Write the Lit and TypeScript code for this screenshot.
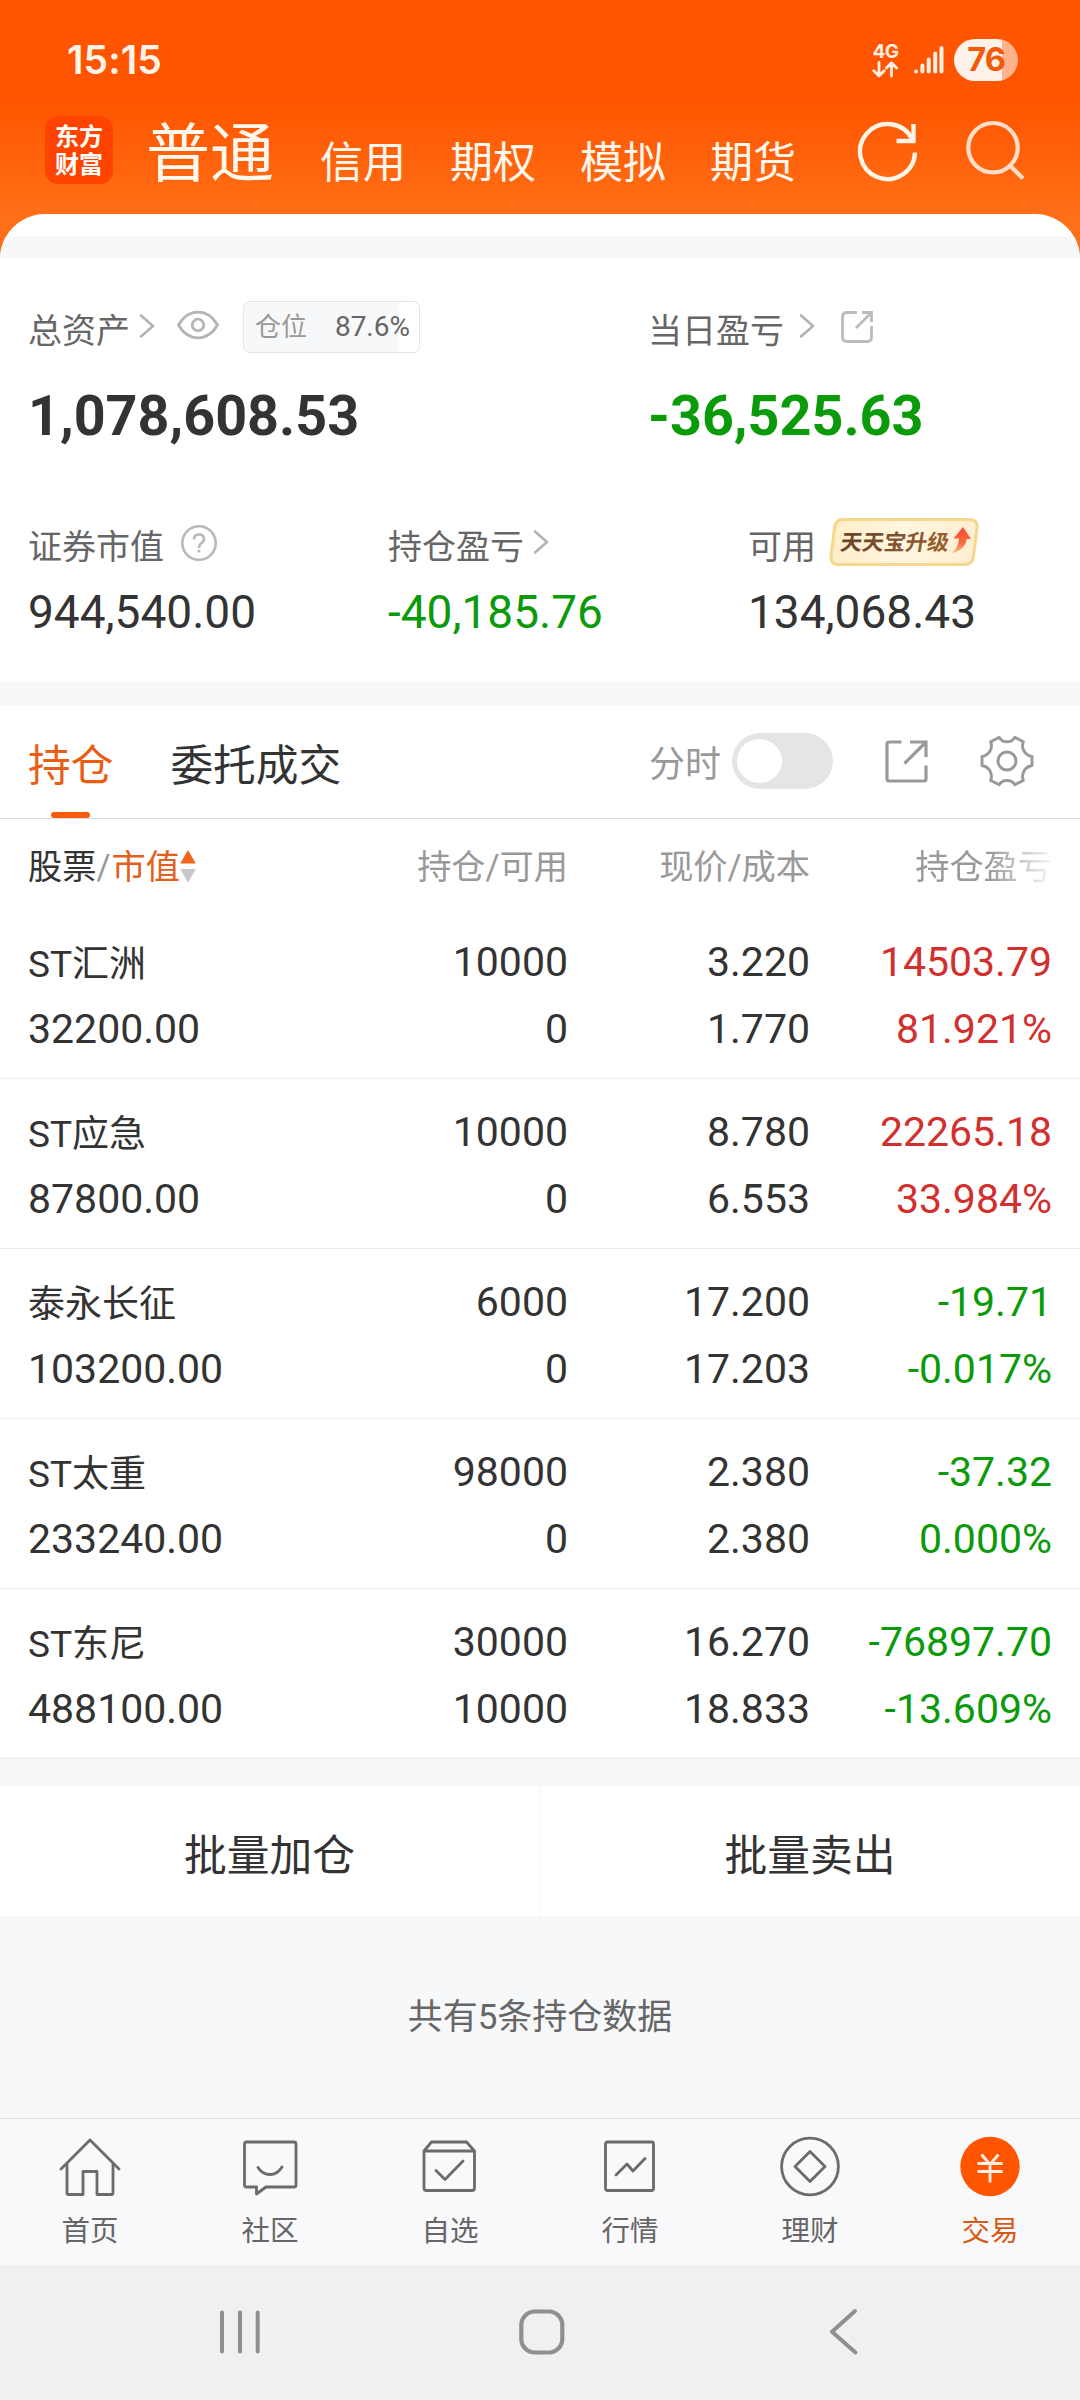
import { LitElement, html, css, svg } from "lit";
import { customElement } from "lit/decorators.js";

type Tone = "up" | "down";

interface Holding {
  name: string;
  value: string;
  qty: string;
  avail: string;
  price: string;
  cost: string;
  profit: string;
  rate: string;
  tone: Tone;
}

const holdings: Holding[] = [
  { name: "ST汇洲", value: "32200.00", qty: "10000", avail: "0", price: "3.220", cost: "1.770", profit: "14503.79", rate: "81.921%", tone: "up" },
  { name: "ST应急", value: "87800.00", qty: "10000", avail: "0", price: "8.780", cost: "6.553", profit: "22265.18", rate: "33.984%", tone: "up" },
  { name: "泰永长征", value: "103200.00", qty: "6000", avail: "0", price: "17.200", cost: "17.203", profit: "-19.71", rate: "-0.017%", tone: "down" },
  { name: "ST太重", value: "233240.00", qty: "98000", avail: "0", price: "2.380", cost: "2.380", profit: "-37.32", rate: "0.000%", tone: "down" },
  { name: "ST东尼", value: "488100.00", qty: "30000", avail: "10000", price: "16.270", cost: "18.833", profit: "-76897.70", rate: "-13.609%", tone: "down" },
];

const chevron = html`<svg class="chevron" width="16" height="26" viewBox="0 0 16 26" fill="none" stroke="#b3b3b3" stroke-width="2.6" stroke-linecap="round" stroke-linejoin="round"><path d="M2 2.500L14 13L2 23.500" /></svg>`;

const navIcons = [
  { label: "首页", icon: svg`<path d="M3 36L32 7L61 36" stroke-linecap="round"/><path d="M9 31V60Q9 61.500 10.500 61.500H25V38.500H39V61.500H53.500Q55 61.500 55 60V31"/>` },
  { label: "社区", icon: svg`<path d="M8 9H56Q58 9 58 11V52Q58 54 56 54H28L18.500 61V54H8.500Q6.500 54 6.500 52V11Q6.500 9 8.500 9Z"/><path d="M20 34.500Q24.500 41.500 32 41.500Q39.500 41.500 44 34" stroke-linecap="round"/>` },
  { label: "自选", icon: svg`<path d="M6 18L13.500 9H48.500L56.500 18V55Q56.500 57.500 54 57.500H8.500Q6 57.500 6 55Z"/><path d="M6 18H56.500"/><path d="M18 37.500L27 46.500L45 28" stroke-linecap="round"/>` },
  { label: "行情", icon: svg`<rect x="7.500" y="9" width="48" height="48.500" rx="2"/><path d="M18 42L29 31L35 38L47 25.500" stroke-linecap="round"/>` },
  { label: "理财", icon: svg`<circle cx="32" cy="33.500" r="28.400"/><path d="M32 18.500L47 33.500L32 48.500L17 33.500Z"/>` },
  { label: "交易", icon: svg`<circle cx="32" cy="33.500" r="29.700" fill="#ff5500" stroke="none"/><path d="M23.500 21.500L32 31.500L40.500 21.500M32 31.500V49.500M19.500 30.500H44.500M19.500 38.500H44.500" stroke="#fff0e4"/>` },
];

@customElement("app-root")
export class AppRoot extends LitElement {
  static styles = css`
    :host {
      display: block;
      width: 1080px;
      height: 2400px;
      overflow: hidden;
      background: #f7f8fa;
      color: #333;
      font-family: Roboto, "Noto Sans CJK SC", sans-serif;
    }
    * { box-sizing: border-box; }
    svg { display: block; flex: none; }
    .row { display: flex; align-items: flex-start; white-space: nowrap; }

    .header {
      height: 259px;
      background: linear-gradient(#ff5500 0, #ff5500 100px, #ff6f17 214px);
      color: #fff8ee;
    }
    .status {
      height: 106px;
      padding: 14px 62px 0 67px;
      display: flex;
      align-items: center;
    }
    .time { font: 600 39px/40px Inter, sans-serif; letter-spacing: 0.1px; flex: 1; color: #fff4e8; }
    .net { width: 27px; }
    .net-name { font: 700 19px/20px Inter, sans-serif; text-align: center; letter-spacing: -0.5px; color: #ffeee2; margin-bottom: -1px; }
    .signal { margin: 0 10px 0 14px; }
    .battery {
      width: 64px; height: 42px; border-radius: 21px;
      background: linear-gradient(90deg, #fff2ea 0 48px, #ffb28c 48px);
      color: #f25a08; font: 700 32.500px/42px Inter, sans-serif; text-align: center; letter-spacing: -1px;
    }
    .title { height: 108px; padding-left: 45px; }
    .logo {
      width: 68px; height: 68px; margin: 10px 33px 0 0; padding-top: 7px; border-radius: 13px;
      background: #ff4400; font: 700 24px/28px Roboto, "Noto Sans CJK SC", sans-serif; text-align: center; color: #fff;
    }
    .logo-line { display: block; height: 28px; }
    .mode-main { font-size: 64px; line-height: 64px; margin: 17px 46px 0 0; }
    .modes { display: flex; gap: 44px; font-size: 43px; line-height: 44px; padding-top: 35px; }
    .refresh { margin: 13px 42px 0 60px; }
    .search { margin-top: 13px; }

    .sheet { margin-top: -45px; border-radius: 45px 45px 0 0; overflow: hidden; background: #fff; }
    .gap { height: 23px; background: #f7f8fa; }
    .gap.first { margin-top: 22px; }

    .assets { height: 423px; padding: 42px 0 0 28px; color: #666; }
    .pair { display: grid; grid-template-columns: 620px 1fr; }
    .trio { display: grid; grid-template-columns: 360px 360px 1fr; margin-top: 68px; }
    .label { height: 52px; font-size: 34px; line-height: 60px; }
    .trio .label { height: 50px; }
    .label .chevron { margin: 12px 0 0 9px; }
    .label .spacer { width: 6px; }
    .total { font-size: 55.700px; font-weight: 700; line-height: 66px; margin-top: 30px; color: #333; }
    .sum { font-size: 46px; line-height: 50px; margin-top: 20px; color: #333; }
    .down { color: #0a9a0a; }
    .up { color: #d2302f; }
    .eye { margin: 9px 0 0 22px; }
    .ratio {
      display: flex; align-items: center; justify-content: space-between;
      width: 177px; height: 52px; margin-left: 24px; padding: 0 9px 0 11px;
      border: 1px solid #e2e4e8; border-radius: 7px;
      background: linear-gradient(90deg, #f7f8fa 0 155px, #fff 155px);
      font-size: 28px; line-height: 50px;
    }
    .ratio-name { font-size: 26px; color: #999; }
    .share { margin: 8px 0 0 24px; }
    .help { margin: 7px 0 0 16px; }
    .badge { margin: 0 0 0 13px; }

    .tabs { height: 114px; padding: 0 0 0 28px; border-bottom: 1px solid #dcdcdc; font-size: 42.700px; line-height: 123px; }
    .tab { height: 113px; margin-right: 57px; display: flex; flex-direction: column; align-items: center; }
    .tab-text { height: 107px; }
    .tab.on { color: #ea5d12; }
    .bar { width: 39px; height: 6px; border-radius: 3px; background: #f95a0c; }
    .minute { margin-left: auto; font-size: 36px; line-height: 121px; color: #999; }
    .switch { width: 101px; height: 56px; border-radius: 28px; background: #e5e5e7; margin: 28px 0 0 11px; padding: 6px 5px; }
    .knob { width: 45px; height: 44px; border-radius: 50%; background: #fff; }
    .open { margin: 33px 0 0 50px; }
    .gear { margin: 29px 46px 0 51px; }

    .cols { display: grid; grid-template-columns: 257px 283px 242px 242px; padding-left: 28px; text-align: right; white-space: nowrap; }
    .heads { height: 90px; font-size: 34.200px; line-height: 97px; color: #999; }
    .first-col { text-align: left; }
    .name-head { display: flex; color: #333; }
    .slash { color: #999; padding-right: 1px; }
    .sorted { color: #e0601c; }
    .sort { margin: 31px 0 0 0; }
    .fade { -webkit-mask-image: linear-gradient(90deg, #000 0 178px, transparent 248px); mask-image: linear-gradient(90deg, #000 0 178px, transparent 248px); }
    .item { height: 170px; padding-top: 20px; border-bottom: 1px solid #ebebed; font-size: 41px; line-height: 67px; }
    .name { font-size: 37px; line-height: 72px; height: 67px; }

    .batch { display: grid; grid-template-columns: 539px 1px 540px; height: 129px; margin-top: 28px; background: #fff; font-size: 42.800px; line-height: 138px; text-align: center; }
    .divider { background: #f4f5f7; }
    .note { height: 202px; font-size: 35px; line-height: 204px; text-align: center; color: #666; }
    .nav { display: grid; grid-template-columns: repeat(6, 180px); height: 147px; border-top: 1px solid #e0e1e3; background: #f9f9fb; color: #666; font-size: 28.500px; line-height: 40px; text-align: center; }
    .nav-item { padding-top: 14px; }
    .nav-item svg { margin: 0 0 11px 57.500px; }
    .nav-item.on { color: #d95a14; }
    .system { display: flex; height: 135px; background: #f0f0f2; padding: 42px 0 0 218px; }
    .home { margin: 0 264px 0 255px; }
  `;

  render() {
    return html`
      <header class="header">
        <div class="status">
          <div class="time">15:15</div>
          <div class="net">
            <div class="net-name">4G</div>
            <svg width="27" height="17" viewBox="0 0 27 17" fill="none" stroke="#ffeee2" stroke-width="2.800" stroke-linecap="round" stroke-linejoin="round"><path d="M7 1.500V15M1.800 9.800L7 15L12.200 9.800M19.500 15V1.800M14.300 7L19.500 1.800L24.700 7" /></svg>
          </div>
          <svg class="signal" width="31" height="30" viewBox="0 0 31 30" stroke="#ffeee2" stroke-width="4" stroke-linecap="round"><path d="M3 26.500V26.600M9.400 20.500V26.500M15.700 14.500V26.500M22.200 8.500V26.500M28.500 3V26.500" /></svg>
          <div class="battery">76</div>
        </div>
        <div class="title row">
          <div class="logo"><span class="logo-line">东方</span><span class="logo-line">财富</span></div>
          <div class="mode-main">普通</div>
          <div class="modes"><span>信用</span><span>期权</span><span>模拟</span><span>期货</span></div>
          <svg class="refresh" width="64" height="64" viewBox="0 0 64 64" fill="none" stroke="#fff4e6" stroke-width="4.400"><path d="M59 33.500A27.500 27.500 0 1 1 56 20" /><path d="M57.500 5V22H40.500" /></svg>
          <svg class="search" width="64" height="64" viewBox="0 0 64 64" fill="none" stroke="#ffdfc8" stroke-width="4.200"><circle cx="31" cy="28.700" r="24.700" /><path d="M48 46.500L61 59.500" /></svg>
        </div>
      </header>

      <main class="sheet">
        <div class="gap first"></div>
        <section class="assets">
          <div class="pair">
            <div>
              <div class="label row">
                <span>总资产</span>${chevron}
                <svg class="eye" width="42" height="30" viewBox="0 0 42 30" fill="none" stroke="#b5b5b5" stroke-width="2.800" stroke-linejoin="round"><path d="M1.500 15Q9 2.200 21 2.200Q33 2.200 40.500 15Q33 27.800 21 27.800Q9 27.800 1.500 15Z" /><circle cx="21" cy="15" r="5.800" /></svg>
                <div class="ratio"><span class="ratio-name">仓位</span><span>87.6%</span></div>
              </div>
              <div class="total">1,078,608.53</div>
            </div>
            <div>
              <div class="label row">
                <span>当日盈亏</span><span class="spacer"></span>${chevron}
                <svg class="share" width="36" height="36" viewBox="0 0 36 36" fill="none" stroke="#bcbcbc" stroke-width="2.800"><path d="M18 3.500H8Q3.500 3.500 3.500 8V28Q3.500 32.500 8 32.500H28Q32.500 32.500 32.500 28V17" /><path d="M23 3.500H32.500V13M32.500 3.500L17 19" /></svg>
              </div>
              <div class="total down">-36,525.63</div>
            </div>
          </div>
          <div class="trio">
            <div>
              <div class="label row">
                <span>证券市值</span>
                <svg class="help" width="38" height="38" viewBox="0 0 38 38" fill="none" stroke="#b9b9b9" stroke-width="2.600"><circle cx="19" cy="19" r="16.700" /><path d="M14 15.500Q14 10.500 19 10.500Q24 10.500 24 15Q24 17.500 21 19.500Q19 21 19 24M19 25.800V28.600" /></svg>
              </div>
              <div class="sum">944,540.00</div>
            </div>
            <div>
              <div class="label row"><span>持仓盈亏</span>${chevron}</div>
              <div class="sum down">-40,185.76</div>
            </div>
            <div>
              <div class="label row">
                <span>可用</span>
                <svg class="badge" width="152" height="50" viewBox="0 0 152 50">
                  <defs>
                    <linearGradient id="arrow" x1="0" y1="0" x2="0" y2="1"><stop offset="0" stop-color="#fb4a38" /><stop offset="0.6" stop-color="#f8683c" /><stop offset="1" stop-color="#fbb870" /></linearGradient>
                    <linearGradient id="ink" x1="0" y1="0" x2="1" y2="0"><stop offset="0" stop-color="#68432c" /><stop offset="1" stop-color="#9a6030" /></linearGradient>
                    <linearGradient id="cream" x1="0" y1="0" x2="1" y2="0"><stop offset="0" stop-color="#ffedc8" /><stop offset="0.5" stop-color="#fff6e0" /><stop offset="1" stop-color="#ffeed0" /></linearGradient>
                  </defs>
                  <path d="M14 2.500H140Q149 2.500 148 11L144.500 39Q143.500 47.500 136 47.500H10Q1 47.500 2 39L5.500 11Q6.500 2.500 14 2.500Z" fill="url(#cream)" stroke="#f6d78e" stroke-width="3" />
                  <text x="0" y="0" transform="translate(10.500 33.200) skewX(-9)" font-family="Noto Sans CJK SC" font-weight="700" font-size="21.700" fill="url(#ink)">天天宝升级</text>
                  <path d="M134 10L142 22H137.500Q137 32 123 36Q129.500 30.500 130 21.500H124.500Z" fill="url(#arrow)" />
                </svg>
              </div>
              <div class="sum">134,068.43</div>
            </div>
          </div>
        </section>
        <div class="gap"></div>

        <div class="tabs row">
          <div class="tab on"><div class="tab-text">持仓</div><div class="bar"></div></div>
          <div class="tab"><div class="tab-text">委托成交</div></div>
          <div class="minute">分时</div>
          <div class="switch"><div class="knob"></div></div>
          <svg class="open" width="46" height="46" viewBox="0 0 46 46" fill="none" stroke="#999" stroke-width="3.200"><path d="M18.500 4H6Q4 4 4 6V41Q4 43 6 43H41Q43 43 43 41V27.500" /><path d="M27 4H43V19M43 4L21.500 25.500" /></svg>
          <svg class="gear" width="54" height="54" viewBox="0 0 54 54" fill="none" stroke="#999" stroke-width="2.900" stroke-linejoin="round"><path d="M19.300 3.300Q21.500 7.700 27 7.700Q32.500 7.700 34.700 3.300L43.300 7.700Q41.500 13 44 17Q46.500 21.500 52 22.500V31.500Q46.500 32.500 44 37Q41.500 41.500 43.300 46.500L34.700 50.700Q32.500 46.500 27 46.500Q21.500 46.500 19.300 50.700L10.700 46.500Q12.500 41.500 10 37Q7.500 32.500 2 31.500V22.500Q7.500 21.500 10 17Q12.500 13 10.700 7.700Z" /><circle cx="27" cy="27" r="9" /></svg>
        </div>

        <div class="cols heads">
          <div class="name-head first-col"><span>股票</span><span class="slash">/</span><span class="sorted">市值</span>
            <svg class="sort" width="16" height="34" viewBox="0 0 16 34"><path d="M8 0L15.800 13.500H0.200Z" fill="#f26419" /><path d="M8 32.500L15.800 19H0.200Z" fill="#c8c8c8" /></svg>
          </div>
          <div>持仓/可用</div>
          <div>现价/成本</div>
          <div class="fade">持仓盈亏</div>
        </div>
        ${holdings.map(
          (h) => html`
            <div class="cols item">
              <div class="first-col"><div class="name">${h.name}</div><div>${h.value}</div></div>
              <div><div>${h.qty}</div><div>${h.avail}</div></div>
              <div><div>${h.price}</div><div>${h.cost}</div></div>
              <div class=${h.tone}><div>${h.profit}</div><div>${h.rate}</div></div>
            </div>
          `
        )}
      </main>

      <div class="batch"><div>批量加仓</div><div class="divider"></div><div>批量卖出</div></div>
      <div class="note">共有5条持仓数据</div>

      <nav class="nav">
        ${navIcons.map(
          (n, i) => html`
            <div class="nav-item ${i === 5 ? "on" : ""}">
              <svg width="64" height="68" viewBox="0 0 64 68" fill="none" stroke="#6b6b6b" stroke-width="2.800" stroke-linejoin="round">${n.icon}</svg>
              ${n.label}
            </div>
          `
        )}
      </nav>
      <div class="system">
        <svg width="44" height="50" viewBox="0 0 44 50" stroke="#8f8f8f" stroke-width="4" stroke-linecap="round"><path d="M4 5.500V44.500M22 5.500V44.500M39.700 5.500V44.500" /></svg>
        <svg class="home" width="48" height="50" viewBox="0 0 48 50" fill="none" stroke="#8f8f8f" stroke-width="4.200"><rect x="4.300" y="4.500" width="41" height="41" rx="13.500" /></svg>
        <svg width="34" height="50" viewBox="0 0 34 50" fill="none" stroke="#8f8f8f" stroke-width="4" stroke-linecap="round" stroke-linejoin="round"><path d="M26 4L3 24.700L26.500 45.500" /></svg>
      </div>
    `;
  }
}
